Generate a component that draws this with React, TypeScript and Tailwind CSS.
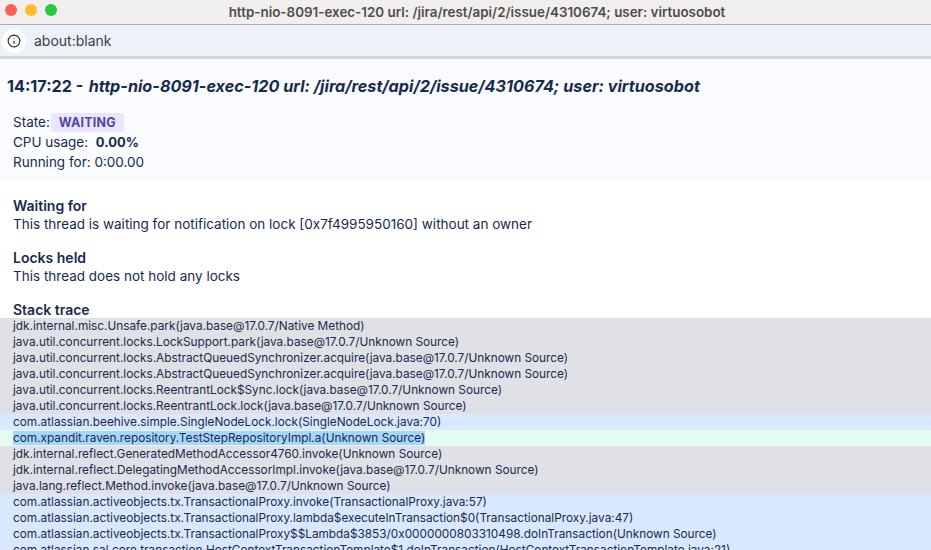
import React from 'react';
import { Info } from 'lucide-react';

const frames = [
  { text: 'jdk.internal.misc.Unsafe.park(java.base@17.0.7/Native Method)', kind: 'jdk' },
  { text: 'java.util.concurrent.locks.LockSupport.park(java.base@17.0.7/Unknown Source)', kind: 'jdk' },
  { text: 'java.util.concurrent.locks.AbstractQueuedSynchronizer.acquire(java.base@17.0.7/Unknown Source)', kind: 'jdk' },
  { text: 'java.util.concurrent.locks.AbstractQueuedSynchronizer.acquire(java.base@17.0.7/Unknown Source)', kind: 'jdk' },
  { text: 'java.util.concurrent.locks.ReentrantLock$Sync.lock(java.base@17.0.7/Unknown Source)', kind: 'jdk' },
  { text: 'java.util.concurrent.locks.ReentrantLock.lock(java.base@17.0.7/Unknown Source)', kind: 'jdk' },
  { text: 'com.atlassian.beehive.simple.SingleNodeLock.lock(SingleNodeLock.java:70)', kind: 'lib' },
  { text: 'com.xpandit.raven.repository.TestStepRepositoryImpl.a(Unknown Source)', kind: 'app' },
  { text: 'jdk.internal.reflect.GeneratedMethodAccessor4760.invoke(Unknown Source)', kind: 'jdk' },
  { text: 'jdk.internal.reflect.DelegatingMethodAccessorImpl.invoke(java.base@17.0.7/Unknown Source)', kind: 'jdk' },
  { text: 'java.lang.reflect.Method.invoke(java.base@17.0.7/Unknown Source)', kind: 'jdk' },
  { text: 'com.atlassian.activeobjects.tx.TransactionalProxy.invoke(TransactionalProxy.java:57)', kind: 'lib' },
  { text: 'com.atlassian.activeobjects.tx.TransactionalProxy.lambda$executeInTransaction$0(TransactionalProxy.java:47)', kind: 'lib' },
  { text: 'com.atlassian.activeobjects.tx.TransactionalProxy$$Lambda$3853/0x0000000803310498.doInTransaction(Unknown Source)', kind: 'lib' },
  { text: 'com.atlassian.sal.core.transaction.HostContextTransactionTemplate$1.doInTransaction(HostContextTransactionTemplate.java:21)', kind: 'lib' },
];

const rowColors: Record<string, string> = {
  jdk: 'bg-[#dfe1e6]',
  lib: 'bg-[#d9e8fe]',
  app: 'bg-[#e3fcef]',
};

const App: React.FC = () => {
  return (
    <div className="h-[550px] w-[931px] overflow-hidden bg-white font-['Inter',sans-serif] text-[13.5px] leading-[20px] text-[#172b4d]">
      {/* Window title bar */}
      <div className="relative flex h-[25px] items-center justify-center border-b border-[#acaaad] bg-[#f1efed] pl-[23px]">
        <div className="absolute left-[5px] top-[4px] flex gap-[8px]">
          <div className="h-3 w-3 rounded-full bg-[#fe5f57]" />
          <div className="h-3 w-3 rounded-full bg-[#febc2e]" />
          <div className="h-3 w-3 rounded-full bg-[#28c840]" />
        </div>
        <span className="text-[13.4px] font-semibold text-[#4d4d4d]">
          http-nio-8091-exec-120 url: /jira/rest/api/2/issue/4310674; user: virtuosobot
        </span>
      </div>

      {/* Address bar */}
      <div className="flex h-[34px] items-center gap-[8px] border-b-[3px] border-[#d5d7da] bg-[#edf1f9] pl-[2px]">
        <div className="flex h-6 w-6 items-center justify-center rounded-full bg-white">
          <Info className="h-[14px] w-[14px] text-[#2b2b2b]" />
        </div>
        <span className="text-[14px] text-[#3d3d3d]">about:blank</span>
      </div>

      {/* Thread header */}
      <div className="bg-[#fafbff] pb-[10px]">
        <h1 className="px-[7px] pt-[15px] text-[16.2px] leading-[24px] font-bold text-[#172b4d]">
          14:17:22 - <i className="ml-[1.5px]">http-nio-8091-exec-120 url: /jira/rest/api/2/issue/4310674; user: virtuosobot</i>
        </h1>
        <div className="mt-[14px] px-[13px]">
          <div className="flex items-center">
            State:
            <span className="ml-px rounded-[3px] bg-[#eae6ff] px-2 text-[12.5px] leading-[19px] font-bold tracking-[0.2px] text-[#5243aa]">
              WAITING
            </span>
          </div>
          <div>
            CPU usage: <b className="ml-[4px] text-[13px] font-bold">0.00%</b>
          </div>
          <div>Running for: 0:00.00</div>
        </div>
      </div>

      <div className="px-[13px] pt-[14px]">
        <h2 className="text-[14px] leading-[20px] font-semibold">Waiting for</h2>
        <p className="leading-[16px]">This thread is waiting for notification on lock [0x7f4995950160] without an owner</p>
        <h2 className="mt-[16px] text-[14px] leading-[20px] font-semibold">Locks held</h2>
        <p className="leading-[16px]">This thread does not hold any locks</p>
        <h2 className="mt-[16px] text-[14px] leading-[20px] font-semibold">Stack trace</h2>
      </div>

      <div className="mt-[-2px] text-[11.8px] leading-[16px]">
        {frames.map((frame, i) => (
          <div key={i} className={`${rowColors[frame.kind]} px-[13px] whitespace-nowrap`}>
            {frame.kind === 'app' ? <span className="bg-[#a8d5fb]">{frame.text}</span> : frame.text}
          </div>
        ))}
      </div>
    </div>
  );
};

export default App;
